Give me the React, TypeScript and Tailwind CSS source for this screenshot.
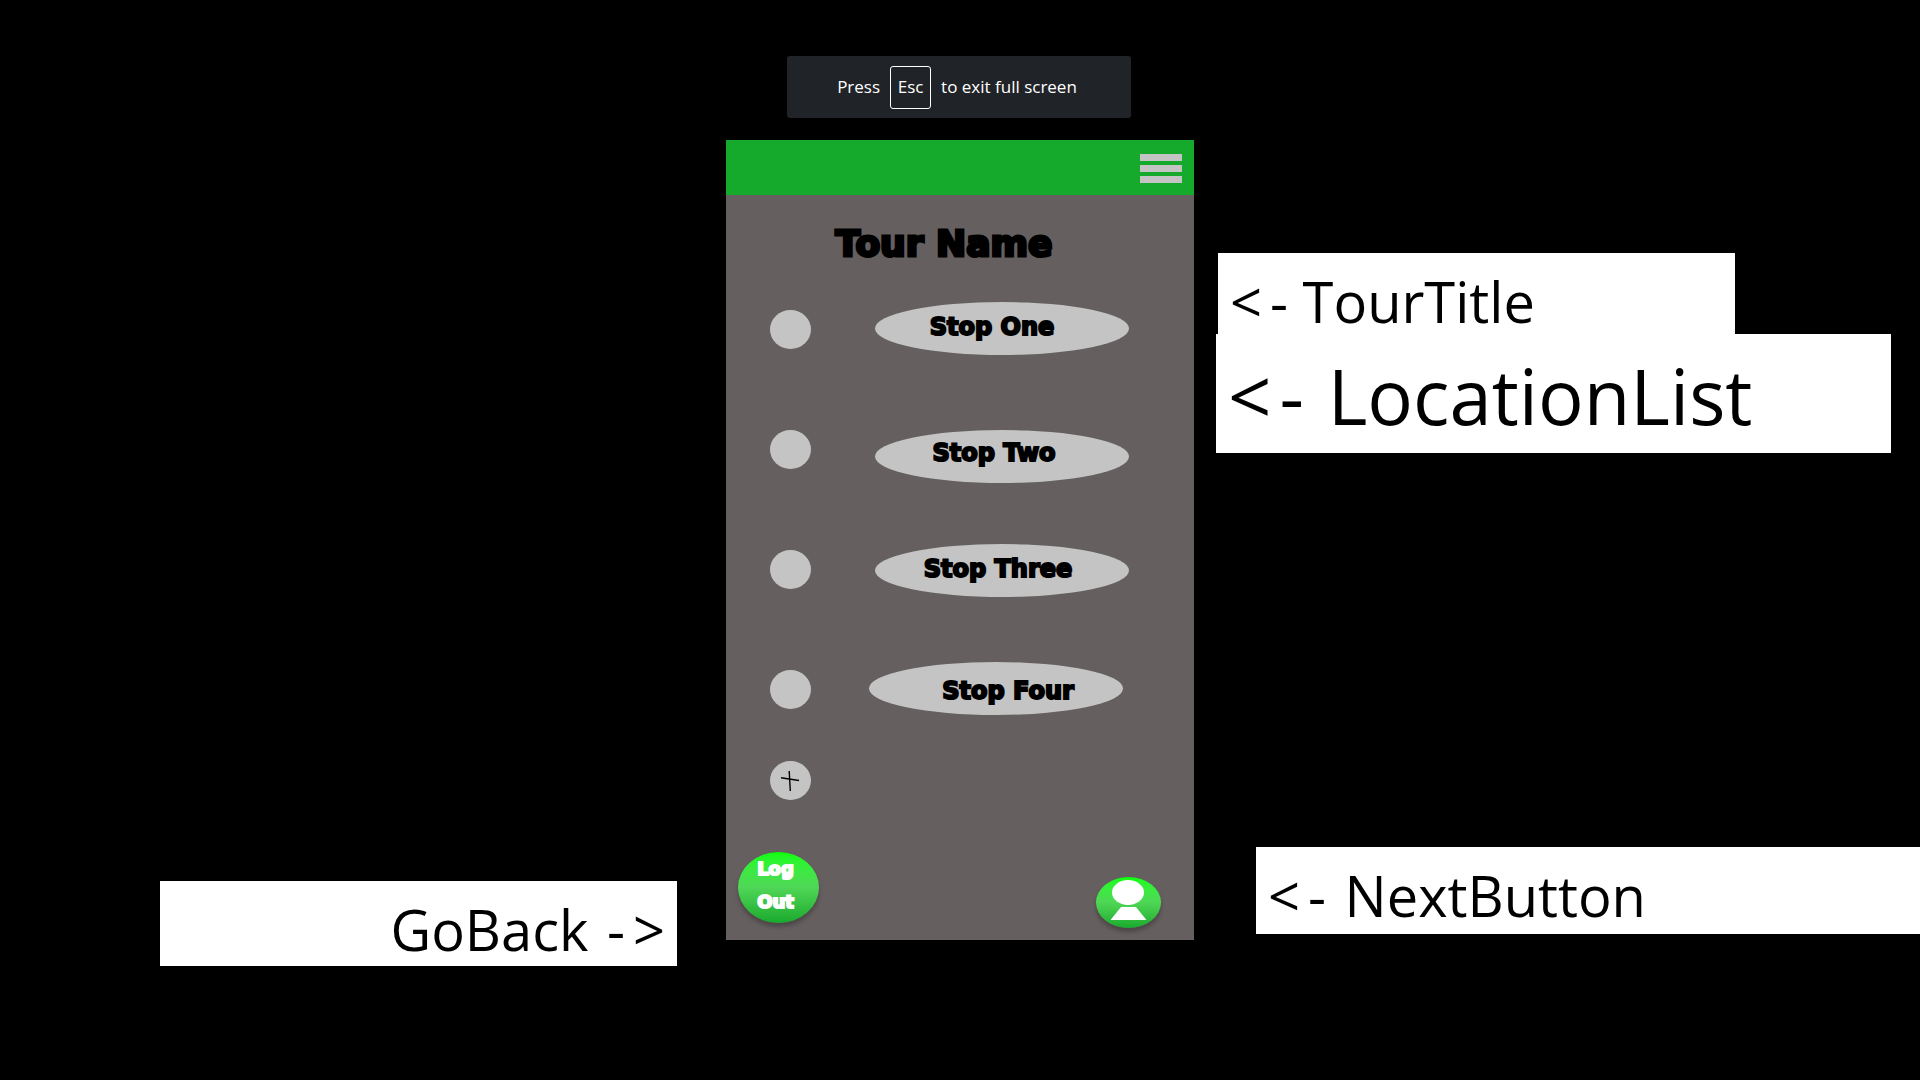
const stops = [
  { name: "Stop One", row: "pt-0", pill: "pr-5 pb-1" },
  { name: "Stop Two", row: "pt-2", pill: "pr-4 pb-2" },
  { name: "Stop Three", row: "pt-0.5", pill: "pr-2 pb-1" },
  { name: "Stop Four", row: "pt-0 -ml-1.5", pill: "pl-6 pt-1" },
];

const display = "font-['DejaVu_Sans',sans-serif] font-bold";

function Toast() {
  return (
    <div
      role="status"
      className="mr-0.5 flex h-[62px] w-[344px] items-center justify-center rounded-[3px] bg-[#202327] pr-1 font-['Open_Sans',sans-serif] text-[17px] text-white"
    >
      <span>Press</span>
      <kbd className="mr-2.5 ml-2.5 flex h-[43px] w-[41px] items-center justify-center rounded-[3px] border border-white font-['Open_Sans',sans-serif] text-[17px]">
        Esc
      </kbd>
      <span>to exit full screen</span>
    </div>
  );
}

function Phone() {
  return (
    <main className="flex h-[800px] flex-col bg-[#655f5f] text-black">
      <header className="flex h-[55px] items-center justify-end bg-[#16aa2d] pt-px pr-3">
        <button type="button" aria-label="Menu" className="flex flex-col gap-1">
          <span className="h-[7px] w-[42px] bg-[#c4c4c4]" />
          <span className="h-[7px] w-[42px] bg-[#c4c4c4]" />
          <span className="h-[7px] w-[42px] bg-[#c4c4c4]" />
        </button>
      </header>

      <h1
        className={`${display} mt-6 h-[83px] pr-8 text-center text-4xl leading-[50px] [-webkit-text-stroke:3px_currentColor]`}
      >
        Tour Name
      </h1>

      <ul>
        {stops.map((stop) => (
          <li
            key={stop.name}
            className="grid h-[120px] grid-cols-[105px_1fr] items-start pl-11"
          >
            <span className="mt-2 h-[39px] w-[41px] rounded-[50%] bg-[#c4c4c4]" />
            <div className={stop.row}>
              <button
                type="button"
                className={`${display} ${stop.pill} flex h-[53px] w-[254px] items-center justify-center rounded-[50%] bg-[#c4c4c4] text-2xl leading-8 [-webkit-text-stroke:2px_currentColor]`}
              >
                {stop.name}
              </button>
            </div>
          </li>
        ))}
      </ul>

      <button
        type="button"
        aria-label="Add stop"
        className="-mt-[21px] ml-11 flex h-[39px] w-[41px] items-center justify-center rounded-[50%] bg-[#c4c4c4]"
      >
        <svg
          viewBox="0 0 20 22"
          className="h-[22px] w-5"
          stroke="black"
          strokeWidth="1.4"
          aria-hidden="true"
        >
          <path d="M8.2 1 L9.3 21 M0 7.7 L18 10.5" />
        </svg>
      </button>

      <footer className="mt-auto flex items-end justify-between pr-[33px] pb-3 pl-3">
        <button
          type="button"
          className={`${display} mb-[5px] flex h-[71px] w-[81px] flex-col items-center rounded-[50%] bg-linear-to-b from-[#05ff05] via-[#4fd656] to-[#16aa2d] pr-1.5 text-lg leading-[33px] text-white shadow-[0_4px_4px_rgba(0,0,0,0.25)] [-webkit-text-stroke:2px_currentColor]`}
        >
          <span>Log</span>
          <span>Out</span>
        </button>
        <button
          type="button"
          aria-label="Profile"
          className="flex h-[51px] w-[65px] justify-center rounded-[50%] bg-linear-to-b from-[#05ff05] via-[#4fd656] to-[#16aa2d] shadow-[0_4px_4px_rgba(0,0,0,0.25)]"
        >
          <svg
            viewBox="0 0 65 51"
            className="h-[51px] w-[65px]"
            fill="white"
            aria-hidden="true"
          >
            <ellipse cx="32" cy="15.5" rx="16" ry="12.5" />
            <path d="M25 30 H40 L50.5 43 H14.5 Z" />
          </svg>
        </button>
      </footer>
    </main>
  );
}

export default function App() {
  return (
    <div className="flex min-h-screen flex-col items-center overflow-x-hidden bg-black pt-14">
      <Toast />
      <div className="mt-[22px] grid w-full grid-cols-[1fr_468px_1fr] items-start font-['Open_Sans',sans-serif] text-black">
        <aside className="flex justify-end pt-[741px] pr-[49px]">
          <p className="h-[85px] w-[517px] bg-white pt-2.5 pr-3 text-right text-[56px] leading-[76px]">
            <span className="mr-1">GoBack</span> -<span className="ml-2">&gt;</span>
          </p>
        </aside>
        <Phone />
        <aside className="flex flex-col pt-[113px]">
          <p className="ml-6 h-[81px] w-[517px] bg-white pt-2.5 pl-3 text-[56px] leading-[76px]">
            <span className="mr-2">&lt;</span>- <span>TourTitle</span>
          </p>
          <p className="ml-[22px] h-[119px] w-[675px] bg-white pt-2.5 pl-3 text-[76px] leading-[104px]">
            <span className="mr-2">&lt;</span>- <span className="ml-1">LocationList</span>
          </p>
          <p className="mt-[394px] ml-[62px] h-[87px] bg-white pt-2.5 pl-3 text-[56px] leading-[76px]">
            <span className="mr-2">&lt;</span>- <span className="ml-1">NextButton</span>
          </p>
        </aside>
      </div>
    </div>
  );
}
